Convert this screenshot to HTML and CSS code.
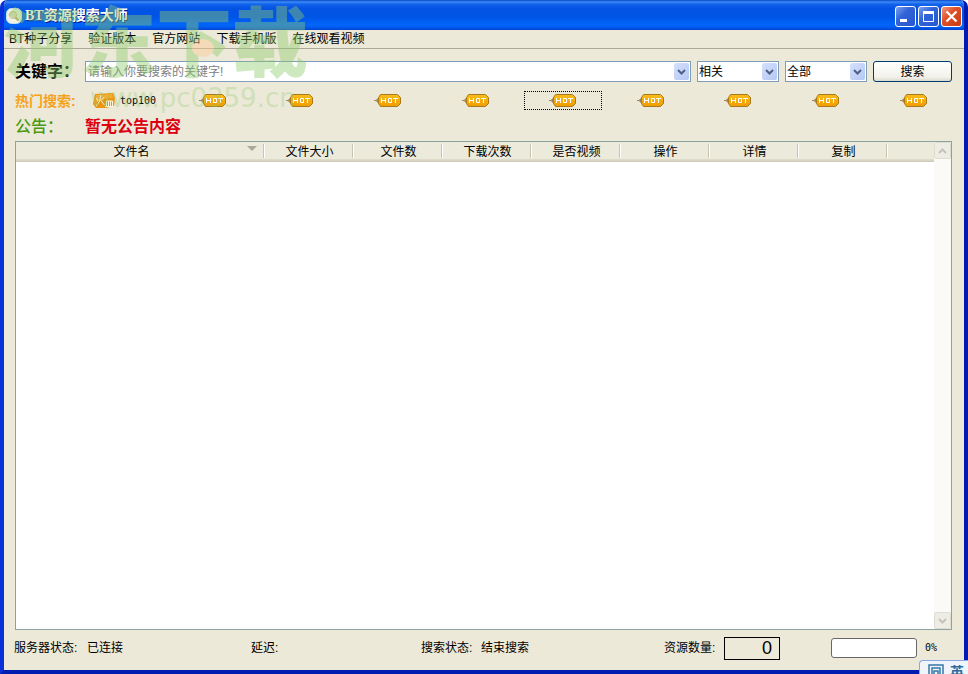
FILE: index.html
```html
<!DOCTYPE html>
<html lang="zh-CN">
<head>
<meta charset="utf-8">
<title>BT资源搜索大师</title>
<link rel="stylesheet" href="styles.css">
</head>
<body>
<svg class="defs" aria-hidden="true">
  <defs>
    <linearGradient id="gold" x1="0" y1="0" x2="0" y2="1"><stop offset="0" stop-color="#f9bd1c"/><stop offset="1" stop-color="#f09c00"/></linearGradient>
    <symbol id="hot" viewBox="0 0 27 13">
      <path d="M0 6.500h2M5 3.500L2 6.500l3 3z" fill="#a0835a" stroke="#a0835a"/>
      <path d="M6.500 .5h17l3 3v6l-3 3h-17l-2-3v-6z" fill="url(#gold)" stroke="#a87a1c"/>
      <path d="M7.500 4v5M11.500 4v5M7 6.500h5M14.500 4.500h3v4h-3zM19 4.500h5M21.500 4v5" fill="none" stroke="#fff"/>
    </symbol>
    <symbol id="down" viewBox="0 0 9 6"><path d="M1 1l3.500 3.500L8 1" fill="none" stroke="currentColor" stroke-width="2"/></symbol>
  </defs>
</svg>
<div class="window">
  <header class="titlebar">
    <svg class="app-icon" viewBox="0 0 16 16" aria-hidden="true"><rect x=".5" y=".5" width="15" height="15" rx="5" fill="#eef1e4" stroke="#c4dceb"/><circle cx="7" cy="7" r="3.500" fill="#e8dfbd" stroke="#c5bb98"/><path d="M9.500 9.500l3 3" stroke="#c8a465" stroke-width="2"/></svg>
    <h1>BT资源搜索大师</h1>
    <div class="win-buttons">
      <button type="button" aria-label="最小化"><svg viewBox="0 0 19 19"><path d="M4 13.500h7" stroke="#fff" stroke-width="3"/></svg></button>
      <button type="button" aria-label="最大化"><svg viewBox="0 0 19 19"><path d="M4.500 5v9.500h10V5" fill="none" stroke="#fff"/><path d="M4 5.500h11" stroke="#fff" stroke-width="3"/></svg></button>
      <button type="button" class="close" aria-label="关闭"><svg viewBox="0 0 19 19"><path d="M4.500 4.500l10 10M14.500 4.500l-10 10" stroke="#fff" stroke-width="2.200"/></svg></button>
    </div>
  </header>
  <nav class="menubar">
    <a href="#share">BT种子分享</a><a href="#verify">验证版本</a><a href="#site">官方网站</a><a href="#mobile">下载手机版</a><a href="#video">在线观看视频</a>
  </nav>
  <main>
    <form class="search">
      <label for="keyword">关键字：</label>
      <div class="combo keyword">
        <input id="keyword" type="text" placeholder="请输入你要搜索的关键字!">
        <button type="button" class="drop" aria-label="搜索记录"><svg><use href="#down"/></svg></button>
      </div>
      <div class="combo">
        <select aria-label="排序"><option>相关</option></select>
        <span class="drop"><svg><use href="#down"/></svg></span>
      </div>
      <div class="combo">
        <select aria-label="类型"><option>全部</option></select>
        <span class="drop"><svg><use href="#down"/></svg></span>
      </div>
      <button type="button" class="submit">搜索</button>
    </form>
    <div class="hot-row">
      <span class="hot-label">热门搜索:</span>
      <div class="hot-list">
        <button type="button" class="top"><svg class="fire" viewBox="0 0 24 16" aria-hidden="true"><path d="M3 1l18-1 2 5-1 8-8 2H4l-3-4z" fill="#ee9410"/><path d="M4 2l16-1 1 4-9 1-9 4z" fill="#f6ad30"/><path d="M4.500 5l1.500 3M12 4l-2 3M8.500 2q0 7-4.500 11M8.500 7l4 5M14.500 8h6v5M14.500 8v5M13 13.500h9M16.500 8v5M18.500 8v5" fill="none" stroke="#fff5d8"/></svg>top100</button>
        <button type="button" aria-label="热门1"><svg class="hot"><use href="#hot"/></svg></button>
        <button type="button" aria-label="热门2"><svg class="hot"><use href="#hot"/></svg></button>
        <button type="button" aria-label="热门3"><svg class="hot"><use href="#hot"/></svg></button>
        <button type="button" aria-label="热门4"><svg class="hot"><use href="#hot"/></svg></button>
        <button type="button" class="focused" aria-label="热门5"><svg class="hot"><use href="#hot"/></svg></button>
        <button type="button" aria-label="热门6"><svg class="hot"><use href="#hot"/></svg></button>
        <button type="button" aria-label="热门7"><svg class="hot"><use href="#hot"/></svg></button>
        <button type="button" aria-label="热门8"><svg class="hot"><use href="#hot"/></svg></button>
        <button type="button" aria-label="热门9"><svg class="hot"><use href="#hot"/></svg></button>
      </div>
    </div>
    <div class="notice"><span class="notice-label">公告：</span><strong>暂无公告内容</strong></div>
    <div class="results">
      <div class="sheet">
        <table>
          <colgroup><col class="c-name"><col class="c"><col class="c"><col class="c"><col class="c"><col class="c"><col class="c"><col class="c"><col></colgroup>
          <thead><tr>
            <th class="sorted">文件名<svg class="sort" viewBox="0 0 10 5" aria-hidden="true"><path d="M0 0h10L5 5z" fill="#aca899"/></svg></th>
            <th>文件大小</th><th>文件数</th><th>下载次数</th><th>是否视频</th><th>操作</th><th>详情</th><th>复制</th><td></td>
          </tr></thead>
        </table>
      </div>
      <div class="scrollbar">
        <button type="button" class="up" aria-label="向上"><svg><use href="#down"/></svg></button>
        <button type="button" aria-label="向下"><svg><use href="#down"/></svg></button>
      </div>
    </div>
    <footer class="status">
      <div><span class="key">服务器状态:</span><span>已连接</span></div>
      <div>延迟:</div>
      <div><span class="key short">搜索状态:</span><span>结束搜索</span></div>
      <div><span class="key short">资源数量:</span><output class="lcd">0</output></div>
      <div><div class="progress" role="progressbar" aria-label="进度" aria-valuenow="0"></div><span class="percent">0%</span></div>
    </footer>
  </main>
  <div class="watermark" aria-hidden="true"><span class="mark-name">河东下载</span><span class="mark-url">www.pc0359.cn</span></div>
</div>
<div class="ime"><svg viewBox="0 0 16 16" aria-hidden="true"><path d="M1 16V1h14v15M4 16V4h8v12M6 16V7h4v4H6" fill="none" stroke="#3477a4" stroke-width="1.500"/></svg><span>英</span></div>
</body>
</html>
```
FILE: styles.css
```css
* { box-sizing: border-box; }
body {
  margin: 0;
  font: 12px/16px "Liberation Sans", "Noto Sans CJK SC", sans-serif;
  color: #000;
  background: #fff;
}
button, input, select { font: inherit; color: inherit; margin: 0; padding: 0; }
button { border: 0; background: none; }
svg { display: block; }
.defs { position: absolute; width: 0; height: 0; }

.window {
  position: relative;
  display: flex;
  flex-direction: column;
  min-height: 100vh;
  overflow: hidden;
  background: #ece9d8;
  border: solid;
  border-width: 0 4px 4px;
  border-color: #0831d9 #001bb0 #001bb0 #0831d9;
  border-radius: 7px 7px 0 0;
}

.titlebar {
  display: flex;
  align-items: center;
  gap: 3px;
  height: 30px;
  margin: 0 -4px;
  padding: 2px 6px 0;
  background: linear-gradient(#0849c8 0, #3c8cf8 2px, #1464ee 4px, #0554e4 8px, #0055e5 17px, #0266fb 25px, #0058e8 28px, #003fd0);
}
.app-icon { width: 16px; height: 16px; }
.titlebar h1 {
  flex: 1;
  margin: 0;
  font: bold 14px/20px "Liberation Serif", "Noto Sans CJK SC", serif;
  color: #fff;
  text-shadow: 1px 1px #0a1883;
}
.win-buttons { display: flex; gap: 2px; }
.win-buttons button {
  width: 21px;
  height: 21px;
  border: 1px solid #fff;
  border-radius: 3px;
  background: linear-gradient(135deg, #7ba2f0, #3163d8 40%, #2857d0);
}
.win-buttons .close { background: linear-gradient(135deg, #ee9a80, #e0502a 40%, #c83a12); }

.menubar {
  display: flex;
  gap: 16px;
  height: 19px;
  padding: 0 5px;
  line-height: 18px;
  border-bottom: 1px solid #aca899;
}
.menubar a { color: inherit; text-decoration: none; }

main {
  flex: 1;
  display: flex;
  flex-direction: column;
  padding: 12px 12px 0 11px;
}

.search { display: flex; gap: 6px; height: 21px; }
.search label {
  width: 64px;
  font-size: 16px;
  line-height: 22px;
  font-weight: bold;
  white-space: nowrap;
}
.combo {
  position: relative;
  width: 82px;
  border: 1px solid #7f9db9;
  background: #fff;
}
.keyword { flex: 1; }
.combo input, .combo select {
  display: block;
  width: 100%;
  height: 100%;
  padding: 0 18px 0 2px;
  border: 0;
  outline: 0;
  background: none;
  appearance: none;
}
.combo select { padding-left: 1px; }
.combo input::placeholder { color: #808080; opacity: 1; }
.drop {
  position: absolute;
  top: 1px;
  right: 1px;
  bottom: 1px;
  display: grid;
  place-items: center;
  width: 15px;
  border-radius: 2px;
  background: linear-gradient(135deg, #d5e1fd, #b4c8f4);
  color: #4d6185;
  pointer-events: none;
}
.drop svg, .scrollbar svg { width: 9px; height: 6px; }
.submit {
  width: 79px;
  border: 1px solid #003c74;
  border-radius: 3px;
  background: linear-gradient(#fff, #f2f1ea 80%, #dcd8cc);
}

.hot-row { display: flex; margin-top: 9px; height: 19px; }
.hot-label {
  width: 71px;
  font-size: 14px;
  line-height: 20px;
  font-weight: bold;
  color: #f5a31c;
}
.hot-list {
  flex: 1;
  display: grid;
  grid-template-columns: repeat(10, 1fr);
  gap: 10px;
}
.hot-list button { display: flex; align-items: center; justify-content: center; }
.hot-list .top { justify-content: start; gap: 4px; padding-left: 6px; font: 10px/16px "DejaVu Sans Mono", monospace; }
.hot-list .focused { border: 1px dotted #000; }
.fire { width: 24px; height: 16px; }
.hot { width: 27px; height: 13px; }

.notice {
  display: flex;
  margin: 6px 0 4px;
  font-size: 16px;
  line-height: 21px;
}
.notice-label { width: 70px; color: #4c9a14; font-weight: 500; }
.notice strong { color: #dc0010; }

.results {
  flex: 1;
  display: flex;
  border: 1px solid #8ba4a0;
  background: #fff;
}
.sheet { flex: 1; }
table { width: 100%; border-collapse: collapse; table-layout: fixed; }
.c-name { width: 249px; }
.c { width: 89px; }
th, td {
  height: 20px;
  padding: 0;
  font-weight: normal;
  line-height: 16px;
  background: linear-gradient(to right, transparent calc(100% - 2px), #c7c5b2 0, #c7c5b2 calc(100% - 1px), #fff 0) 0 2px / 100% 14px no-repeat;
}
td { background: none; }
thead { background: linear-gradient(#ebeadb 17px, #e2decd 17px, #d6d2c2 19px, #cbc7b8); }
.sorted { position: relative; padding-right: 18px; }
.sort { position: absolute; right: 8px; top: 4px; width: 10px; height: 5px; }
.scrollbar {
  display: flex;
  flex-direction: column;
  justify-content: space-between;
  width: 17px;
  background: #fbfaf6;
}
.scrollbar button {
  display: grid;
  place-items: center;
  height: 17px;
  border: 1px solid #dfddd2;
  border-radius: 2px;
  background: #eeede5;
  color: #c5c3b8;
}
.up svg { transform: rotate(180deg); }

.status {
  display: grid;
  grid-template-columns: 237fr 170fr 243fr 167fr 121fr;
  align-items: center;
  height: 40px;
  padding-bottom: 4px;
  margin-left: -1px;
}
.status > div { display: flex; align-items: center; }
.key { width: 73px; }
.key.short { width: 60px; }
.lcd {
  width: 56px;
  height: 23px;
  padding-right: 7px;
  border: 1px solid #000;
  font: 18px/21px "Liberation Sans Narrow", "Liberation Sans", sans-serif;
  text-align: right;
}
.progress {
  width: 86px;
  height: 20px;
  margin-right: 8px;
  border: 1px solid #686868;
  border-radius: 3px;
  background: #fff;
}
.percent { font: 10px/16px "DejaVu Sans Mono", monospace; }

.watermark {
  position: absolute;
  top: 7px;
  left: 0;
  display: flex;
  flex-direction: column;
  color: #8ccb6c;
  opacity: .42;
  white-space: nowrap;
  pointer-events: none;
}
.watermark::after {
  content: "";
  position: absolute;
  top: 32px;
  left: 188px;
  width: 22px;
  height: 18px;
  border-radius: 50%;
  background: #fcc890;
}
.mark-name { font-size: 76px; line-height: 76px; font-weight: 900; }
.mark-url { padding-left: 86px; font: 26px/30px "DejaVu Sans", sans-serif; padding-left: 86px; opacity: .7; }

.ime {
  position: fixed;
  right: 0;
  bottom: 0;
  display: flex;
  gap: 6px;
  width: 49px;
  height: 14px;
  padding: 3px 0 0 8px;
  overflow: hidden;
  border: solid #86a8e0;
  border-width: 1px 0 0 1px;
  border-radius: 4px 0 0;
  background: #f0f5fd;
  color: #2c6c9c;
}
.ime svg { flex: none; width: 16px; height: 16px; }
.ime span { font-size: 14px; line-height: 16px; font-weight: bold; }
```
